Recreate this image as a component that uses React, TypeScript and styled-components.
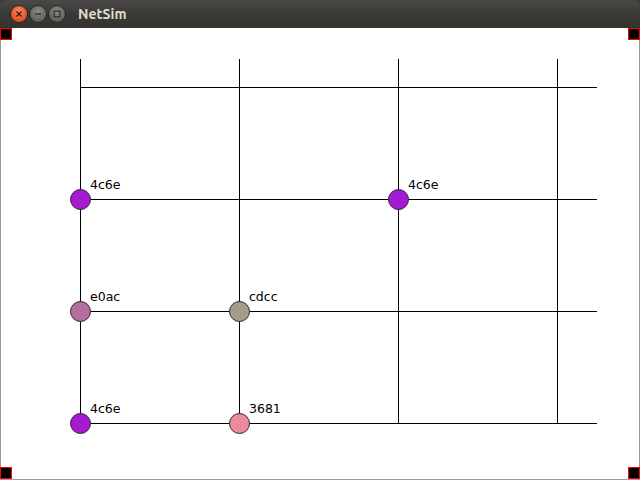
import React from "react";
import styled, { createGlobalStyle } from "styled-components";

const Global = createGlobalStyle`
  html, body { margin: 0; padding: 0; background: #ffffff; }
  body { width: 640px; height: 480px; overflow: hidden; font-family: "DejaVu Sans", sans-serif; }
`;

const Window = styled.div`
  position: relative;
  width: 640px;
  height: 480px;
  display: flex;
  flex-direction: column;
  background: #3c3b37;
`;

const TitleBar = styled.div`
  height: 28px;
  flex: 0 0 28px;
  display: flex;
  align-items: center;
  padding-left: 10px;
  gap: 1px;
  border-radius: 6px 6px 0 0;
  background: linear-gradient(#4a4945, #3a3935 50%, #34332f);
  box-sizing: border-box;
`;

const WinButton = styled.div<{ $kind: "close" | "min" | "max" }>`
  width: 18px;
  height: 18px;
  border-radius: 50%;
  box-sizing: border-box;
  display: flex;
  align-items: center;
  justify-content: center;
  border: 1px solid #2a2926;
  background: ${(p) =>
    p.$kind === "close"
      ? "radial-gradient(circle at 50% 35%, #f58a5e, #e3501f 70%)"
      : "radial-gradient(circle at 50% 35%, #8b8a84, #5f5e59 75%)"};
`;

const Title = styled.div`
  margin-left: 11px;
  color: #dfdbd2;
  font-family: "Ubuntu", "DejaVu Sans", sans-serif;
  font-weight: bold;
  font-size: 14px;
`;

const Content = styled.div`
  position: relative;
  flex: 1;
  background: #ffffff;
  border: 1px solid #9c9c9c;
  border-top: none;
`;

const Corner = styled.div<{ $pos: "tl" | "tr" | "bl" | "br" }>`
  position: absolute;
  width: 12px;
  height: 12px;
  box-sizing: border-box;
  background: #000;
  border: 1px solid #ff0000;
  ${(p) => (p.$pos[0] === "t" ? "top: 0;" : "bottom: 0;")}
  ${(p) => (p.$pos[1] === "l" ? "left: -1px;" : "right: -1px;")}
`;

const Canvas = styled.svg`
  display: block;
  width: 638px;
  height: 451px;
`;

const cols = [80, 239, 398, 557];
const rows = [87, 199, 311, 423];

const nodes = [
  { x: 80, y: 199, label: "4c6e", fill: "#a41bd3" },
  { x: 398, y: 199, label: "4c6e", fill: "#a41bd3" },
  { x: 80, y: 311, label: "e0ac", fill: "#b36f9c" },
  { x: 239, y: 311, label: "cdcc", fill: "#a39e8b" },
  { x: 80, y: 423, label: "4c6e", fill: "#a41bd3" },
  { x: 239, y: 423, label: "3681", fill: "#ec8b9c" },
];

export default function App() {
  return (
    <>
      <Global />
      <Window>
        <TitleBar>
          <WinButton $kind="close">
            <svg width="8" height="8" viewBox="0 0 8 8">
              <path d="M1.5 1.5 L6.5 6.5 M6.5 1.5 L1.5 6.5" stroke="#3a1a10" strokeWidth="1.4" />
            </svg>
          </WinButton>
          <WinButton $kind="min">
            <svg width="8" height="8" viewBox="0 0 8 8">
              <path d="M1 4 H7" stroke="#2e2d2a" strokeWidth="1.4" />
            </svg>
          </WinButton>
          <WinButton $kind="max">
            <svg width="8" height="8" viewBox="0 0 8 8">
              <rect x="1.2" y="1.2" width="5.6" height="5.6" fill="none" stroke="#2e2d2a" strokeWidth="1.2" />
            </svg>
          </WinButton>
          <Title>NetSim</Title>
        </TitleBar>
        <Content>
          <Canvas viewBox="1 28 638 451">
            {cols.map((x) => (
              <line key={"c" + x} x1={x + 0.5} y1={59} x2={x + 0.5} y2={424} stroke="#000" strokeWidth={1} />
            ))}
            {rows.map((y) => (
              <line key={"r" + y} x1={80} y1={y + 0.5} x2={597} y2={y + 0.5} stroke="#000" strokeWidth={1} />
            ))}
            {nodes.map((n, i) => (
              <g key={i}>
                <circle cx={n.x + 0.5} cy={n.y + 0.5} r={10} fill={n.fill} stroke="#3a1e3a" strokeWidth={1} />
                <text x={n.x + 10} y={n.y - 10} fontSize="12.5" fontFamily="'DejaVu Sans', sans-serif" fill="#000">
                  {n.label}
                </text>
              </g>
            ))}
          </Canvas>
          <Corner $pos="tl" />
          <Corner $pos="tr" />
          <Corner $pos="bl" />
          <Corner $pos="br" />
        </Content>
      </Window>
    </>
  );
}
